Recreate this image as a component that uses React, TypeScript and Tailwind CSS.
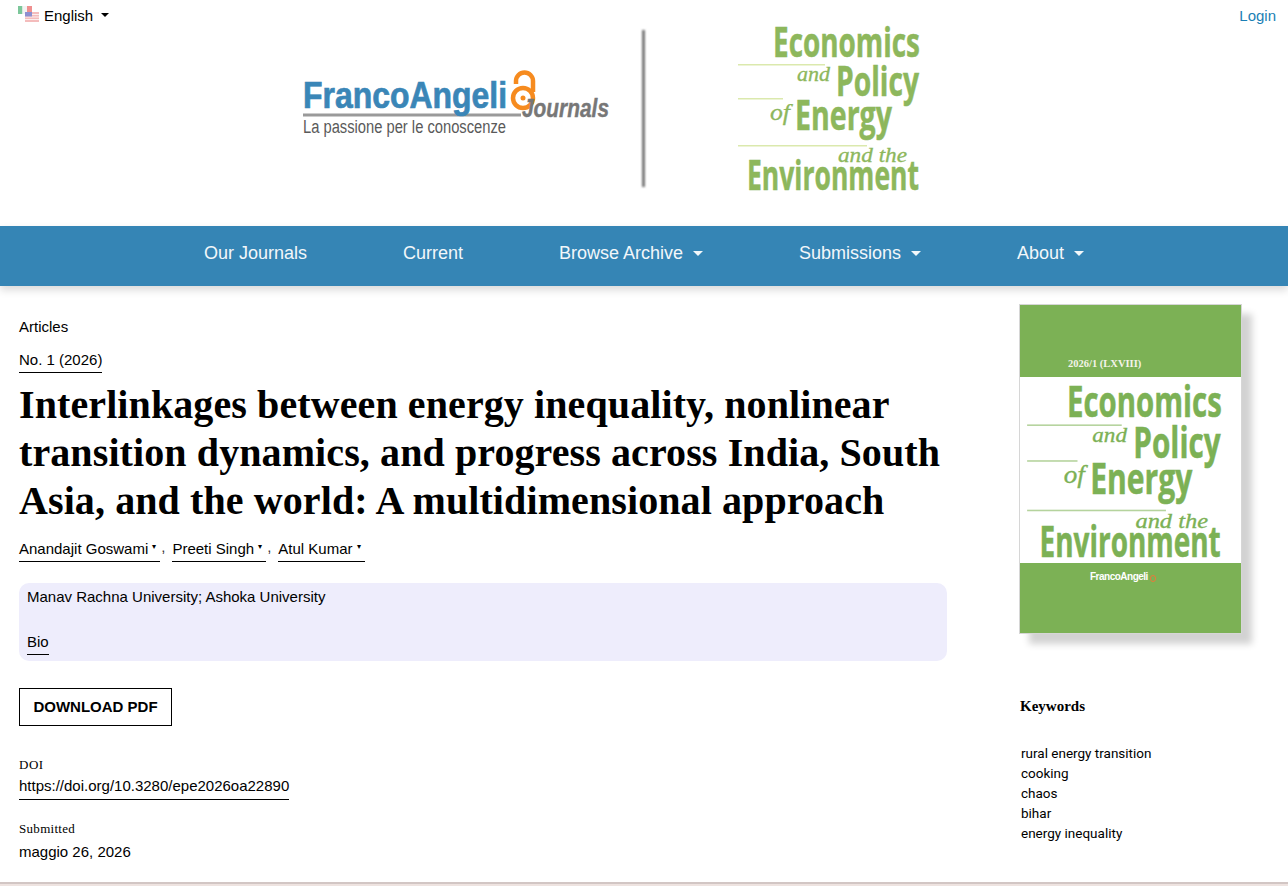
import React from 'react';
import { Fragment } from 'react';

const sans = "font-['Liberation_Sans',Arial,sans-serif]";

const FlagIcon = () => (
  <svg width="22" height="16" viewBox="0 0 22 16" aria-hidden="true">
    <rect x="0" y="0" width="4.5" height="8" fill="#7cc79a" />
    <rect x="4.5" y="0" width="4.5" height="8" fill="#f3f3f3" />
    <rect x="9" y="0" width="5" height="8" fill="#ef8f8f" />
    <rect x="7" y="6" width="14" height="10" fill="#f4bcbc" />
    <rect x="7" y="8" width="14" height="1" fill="#fbeeee" />
    <rect x="7" y="10.5" width="14" height="1" fill="#fbeeee" />
    <rect x="7" y="13" width="14" height="1" fill="#fbeeee" />
    <rect x="7" y="6" width="7" height="4.5" fill="#8d8fd0" />
  </svg>
);

// lead pulls the rules further left, the cover's rules start before the header logo's
const EconLogoText = ({ fill, rule, lead = 0 }: { fill: string; rule: string; lead?: number }) => {
  const big = {
    fontFamily: "'Open Sans', sans-serif",
    fontWeight: 700,
    fill,
    stroke: fill,
    strokeWidth: 0.5,
    lengthAdjust: 'spacingAndGlyphs' as const,
  };
  const small = {
    fontFamily: "'Liberation Serif', serif",
    fontStyle: 'italic',
    fontWeight: 400,
    fill,
    stroke: fill,
    strokeWidth: 0.3,
    lengthAdjust: 'spacingAndGlyphs' as const,
  };
  return (
    <g>
      <text x="773" y="57" fontSize="41" textLength="147" {...big}>Economics</text>
      <rect x={738 - lead} y="64" width={87 + lead} height="1.5" fill={rule} />
      <text x="797" y="81" fontSize="20" textLength="33" {...small}>and</text>
      <text x="836" y="96" fontSize="41" textLength="83" {...big}>Policy</text>
      <rect x={738 - lead} y="98" width={45 + lead} height="1.5" fill={rule} />
      <text x="770" y="120" fontSize="23" textLength="20" {...small}>of</text>
      <text x="795" y="130" fontSize="41" textLength="97" {...big}>Energy</text>
      <rect x={738 - lead} y="145" width={129 + lead} height="1.5" fill={rule} />
      <text x="838" y="162" fontSize="20" textLength="69" {...small}>and the</text>
      <text x="747" y="190" fontSize="41" textLength="172" {...big}>Environment</text>
    </g>
  );
};

const HeaderLogo = () => (
  <svg width="708" height="180" viewBox="290 20 708 180" role="img" aria-label="FrancoAngeli Journals">
    <defs>
      <filter id="soft" x="-200%" width="500%" y="-5%" height="110%">
        <feGaussianBlur stdDeviation="0.8" />
      </filter>
    </defs>
    <rect x="303" y="113.5" width="218" height="3" fill="#9a9a9a" />
    <text x="303" y="108" fontSize="36" fontFamily="'Liberation Sans', sans-serif" fontWeight="700" fill="#3a86b7" stroke="#3a86b7" strokeWidth="0.7" textLength="204" lengthAdjust="spacingAndGlyphs">FrancoAngeli</text>
    <text x="303" y="133" fontSize="18" fontFamily="'Liberation Sans', sans-serif" fill="#5a5a5a" textLength="203" lengthAdjust="spacingAndGlyphs">La passione per le conoscenze</text>
    <path d="M516 84 V81 A7.5 7.5 0 0 1 533 81 V92" fill="none" stroke="#f68b1f" strokeWidth="4.5" />
    <circle cx="523" cy="98" r="10" fill="none" stroke="#f68b1f" strokeWidth="4.5" />
    <circle cx="523" cy="98" r="2.5" fill="#f68b1f" />
    <text x="522" y="117" fontSize="25" fontFamily="'Liberation Sans', sans-serif" fontStyle="italic" fontWeight="700" fill="#777" stroke="#777" strokeWidth="0.4" textLength="87" lengthAdjust="spacingAndGlyphs">Journals</text>
    <rect x="642" y="30" width="3" height="157" fill="#777" filter="url(#soft)" />
    <EconLogoText fill="#8db75c" rule="#dbe9ad" />
  </svg>
);

const navItems = [
  { label: 'Our Journals' },
  { label: 'Current' },
  { label: 'Browse Archive', menu: true },
  { label: 'Submissions', menu: true },
  { label: 'About', menu: true },
];

const authors = ['Anandajit Goswami', 'Preeti Singh', 'Atul Kumar'];
const keywords = ['rural energy transition', 'cooking', 'chaos', 'bihar', 'energy inequality'];

const Cover = () => (
  <div className="flex h-[330px] w-[223px] flex-col border border-[#d6d6d6] shadow-[10px_10px_7px_#d2d2d2]">
    <div className="flex h-[72px] items-end bg-[#7cb155] pb-[6px] pl-[48px] font-['Liberation_Serif',serif] text-[10.5px] leading-[14px] font-bold text-[#f4f4ea]">
      2026/1 (LXVIII)
    </div>
    <svg width="221" height="186" viewBox="0 0 221 186" className="bg-white" role="img" aria-label="Economics and Policy of Energy and the Environment">
      <g transform="translate(-767 -20) scale(1.053)">
        <EconLogoText fill="#7cb155" rule="#b5d39d" lead={2.85} />
      </g>
    </svg>
    <div className="flex flex-1 items-start bg-[#7cb155] pt-[8px] pl-[70px]">
      <span className="font-['Liberation_Sans',sans-serif] text-[10px] leading-[12px] font-bold tracking-[-0.5px] text-white">FrancoAngeli</span>
      <span className="mt-[4px] ml-[2px] h-[7px] w-[6px] rounded-full border border-[#e9793a]" />
    </div>
  </div>
);

export default function App() {
  return (
    <div className={`${sans} h-[886px] overflow-hidden bg-white text-black`}>
      <header className="h-[226px]">
        <div className="flex h-[20px] items-start justify-between pt-[6px] pr-3 pl-[18px] text-[15px] leading-[20px]">
          <div className="flex items-start">
            <FlagIcon />
            <span className="ml-[4px]">English</span>
            <span className="mt-[7px] ml-2 h-0 w-0 border-x-[4.5px] border-t-[4.5px] border-x-transparent border-t-current" />
          </div>
          <a className="text-[#1a7fb5]">Login</a>
        </div>
        <div className="flex justify-center">
          <HeaderLogo />
        </div>
      </header>

      <nav className="flex h-[60px] items-center justify-center gap-[96px] bg-[#3585b5] pb-[6px] text-[18px] text-[#f2f7fa] shadow-[0_4px_8px_rgba(0,0,0,0.15)]">
        {navItems.map((item) => (
          <a key={item.label} className="flex items-center">
            {item.label}
            {item.menu && (
              <span className="ml-[10px] h-0 w-0 border-x-[5px] border-t-[5px] border-x-transparent border-t-current" />
            )}
          </a>
        ))}
      </nav>

      <main className="flex h-[596px] pt-[18px] pr-[24px] pl-[19px]">
        <div className="w-[928px]">
          <div className="mt-[14px] text-[15px] leading-[18px]">Articles</div>
          <a className="mt-[15px] inline-block border-b border-black pb-[3px] text-[15px] leading-[18px]">No. 1 (2026)</a>
          <h1 className="mt-[8px] font-['Liberation_Serif',serif] text-[40px] leading-[48px] font-bold tracking-[0.1px]">
            Interlinkages between energy inequality, nonlinear transition dynamics, and progress across India, South Asia, and the world: A multidimensional approach
          </h1>
          <div className="mt-[13px] flex text-[15px] leading-[18px]">
            {authors.map((name, i) => (
              <Fragment key={name}>
                <a className="border-b border-black pb-[3px]">
                  {name}
                  <span className="inline-block w-[12px] text-center align-[5px] text-[8px]">▾</span>
                </a>
                {i < authors.length - 1 && <span className="mr-[7px] ml-[1px] text-[#333]">,</span>}
              </Fragment>
            ))}
          </div>
          <div className="mt-[21px] h-[78px] rounded-[10px] bg-[#eeedfc] px-2 pt-[5px] text-[15px] leading-[18px]">
            <div>Manav Rachna University; Ashoka University</div>
            <a className="mt-[27px] inline-block border-b border-black pb-[3px]">Bio</a>
          </div>
          <button className="mt-[27px] block h-[38px] w-[153px] border border-black text-center text-[15px] font-bold">
            DOWNLOAD PDF
          </button>
          <div className="mt-[31px] font-['Liberation_Serif',serif] text-[13px] leading-[16px] tracking-[0.5px]">DOI</div>
          <a className="mt-[4px] inline-block border-b border-black pb-[4px] text-[15px] leading-[18px]">https://doi.org/10.3280/epe2026oa22890</a>
          <div className="mt-[21px] font-['Liberation_Serif',serif] text-[13px] leading-[16px] tracking-[0.3px]">Submitted</div>
          <div className="mt-[6px] text-[15px] leading-[18px]">maggio 26, 2026</div>
        </div>

        <aside className="ml-[72px] w-[245px]">
          <Cover />
          <h2 className="mt-[63px] ml-px font-['Liberation_Serif',serif] text-[15px] leading-[18px] font-bold">Keywords</h2>
          <ul className="mt-[28px] ml-[2px] font-['Roboto',sans-serif] text-[13.5px] leading-[20px]">
            {keywords.map((k) => (
              <li key={k}>{k}</li>
            ))}
          </ul>
        </aside>
      </main>
      <div className="h-[2px] bg-[#d2c6c4]" />
      <div className="h-[2px] bg-[#eee3e0]" />
    </div>
  );
}
